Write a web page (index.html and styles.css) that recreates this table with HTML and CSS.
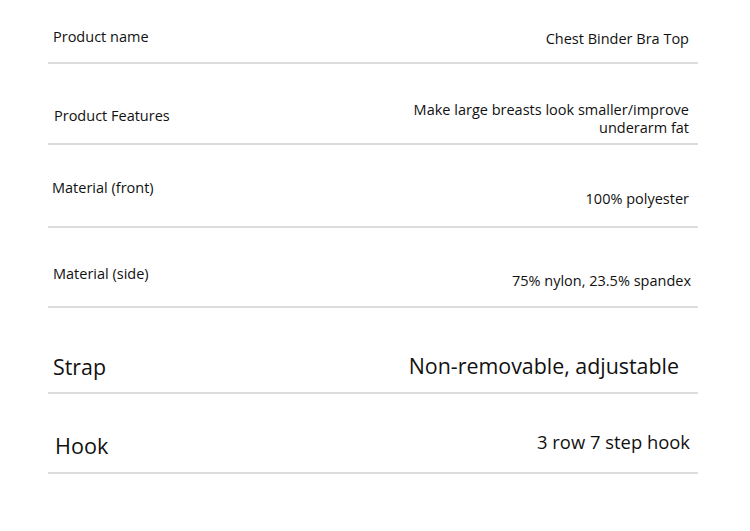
FILE: index.html
```html
<!DOCTYPE html>
<html>
<head>
<meta charset="utf-8">
<link rel="stylesheet" href="styles.css">
</head>
<body>
<div class="table">
  <div class="row r1">
    <div class="k">Product name</div>
    <div class="v">Chest Binder Bra Top</div>
  </div>
  <div class="row r2">
    <div class="k">Product Features</div>
    <div class="v">Make large breasts look smaller/improve<br>underarm fat</div>
  </div>
  <div class="row r3">
    <div class="k">Material (front)</div>
    <div class="v">100% polyester</div>
  </div>
  <div class="row r4">
    <div class="k">Material (side)</div>
    <div class="v">75% nylon, 23.5% spandex</div>
  </div>
  <div class="row r5">
    <div class="k">Strap</div>
    <div class="v">Non-removable, adjustable</div>
  </div>
  <div class="row r6">
    <div class="k">Hook</div>
    <div class="v">3 row 7 step hook</div>
  </div>
</div>
</body>
</html>
```
FILE: styles.css
```css
* { box-sizing: border-box; }
html, body { margin: 0; padding: 0; background: #fff; }
body {
  font-family: "Open Sans", "Noto Sans", sans-serif;
  color: #111;
  width: 750px;
  height: 531px;
  overflow: hidden;
}
.table {
  margin-left: 48px;
  width: 650px;
  display: flex;
  flex-direction: column;
}
.row {
  display: flex;
  justify-content: space-between;
  align-items: flex-start;
  border-bottom: 2px solid #dcdcdc;
  font-size: 14.5px;
  font-weight: 500;
  line-height: 20px;
  padding-left: 5px;
  padding-right: 9px;
}
.v { text-align: right; }
.r1 { height: 64px; }
.r1 .k { margin-top: 27px; }
.r1 .v { margin-top: 29px; }
.r2 { height: 81px; }
.r2 .k { margin-top: 42px; padding-left: 1px; }
.r2 .v { margin-top: 37px; line-height: 18px; }
.r3 { height: 83px; }
.r3 .k { margin-top: 33px; margin-left: -1px; }
.r3 .v { margin-top: 44px; }
.r4 { height: 80px; padding-right: 7px; }
.r4 .k { margin-top: 36px; }
.r4 .v { margin-top: 43px; }
.r5 { height: 86px; font-size: 21.4px; line-height: 30px; padding-right: 19px; }
.r5 .k { margin-top: 44px; }
.r5 .v { margin-top: 43px; }
.r6 { height: 80px; font-size: 21.6px; line-height: 30px; padding-left: 7px; padding-right: 8px; }
.r6 .k { margin-top: 37px; }
.r6 .v { margin-top: 35px; font-size: 18.4px; line-height: 26px; }
```
